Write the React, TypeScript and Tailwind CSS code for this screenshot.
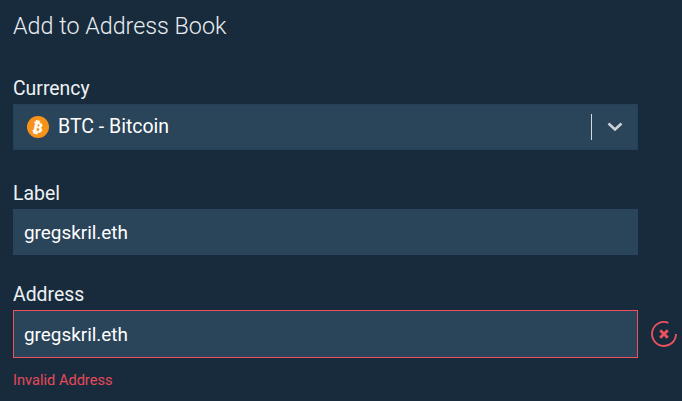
export default function App() {
  return (
    <div className="w-[682px] h-[401px] overflow-hidden bg-[#182b3c] pl-[13px] font-['Roboto',sans-serif] text-white">
      <h1 className="pt-[11px] h-[79px] text-[23.3px] leading-[30px] font-light text-[#e8edf1]">Add to Address Book</h1>
      <div className="h-[19px] flex items-center text-[19.4px] text-[#eef2f5]">Currency</div>
      <div className="mt-[6px] w-[625px] h-[46px] bg-[#2a445a] border border-[#24405a] flex items-center pl-[13px]">
        <svg width="22" height="22" viewBox="0 0 22 22" className="shrink-0">
          <circle cx="11" cy="11" r="11" fill="#f7931a" />
          <text x="11" y="16" textAnchor="middle" fontSize="14" fontWeight="700" fill="#fff" stroke="#fff" strokeWidth="0.5" fontFamily="Roboto" transform="rotate(12 11 11)">₿</text>
        </svg>
        <span className="ml-[9px] text-[19.5px] text-white">BTC - Bitcoin</span>
        <div className="ml-auto w-px h-[26px] bg-[#d5dade]" />
        <svg width="16" height="10" viewBox="0 0 16 10" className="ml-[15px] mr-[14px]" fill="none" stroke="#ccd2d7" strokeWidth="2.6">
          <path d="M1.5 1.5 8 7.5 14.5 1.5" />
        </svg>
      </div>
      <div className="mt-[34px] h-[19px] flex items-center text-[19.4px] text-[#eef2f5]">Label</div>
      <div className="mt-[6px] w-[625px] h-[46px] bg-[#2a445a] flex items-center pl-[11px] pt-[2px] text-[18.9px]">gregskril.eth</div>
      <div className="mt-[30px] h-[19px] flex items-center text-[19.4px] text-[#eef2f5]">Address</div>
      <div className="mt-[6px] flex items-center">
        <div className="w-[625px] shrink-0 h-[48px] bg-[#2a445a] border border-[#ef5160] flex items-center pl-[10px] pt-[2px] text-[18.9px]">gregskril.eth</div>
        <svg width="26" height="26" viewBox="0 0 26 26" className="ml-[13px] shrink-0" fill="none" stroke="#ef5160">
          <path d="M25 13A12 12 0 1 1 17.4 1.8" strokeWidth="1.8" />
          <path d="M9.2 9.2 16.8 16.8M16.8 9.2 9.2 16.8" strokeWidth="2.8" />
        </svg>
      </div>
      <div className="mt-[13px] text-[14.6px] leading-[18px] text-[#e8485a]">Invalid Address</div>
    </div>
  );
}
